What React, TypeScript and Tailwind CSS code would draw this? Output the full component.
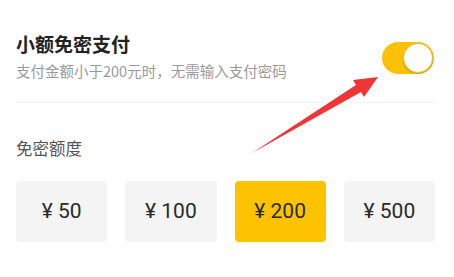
const amounts = [50, 100, 200, 500];

export default function App() {
  return (
    <div
      className="relative w-[454px] h-[277px] bg-white overflow-hidden"
      style={{ fontFamily: '"Noto Sans CJK SC", "Noto Sans", sans-serif' }}
    >
      <div className="pl-4 pr-[19px] pt-[31px]">
        <div className="flex items-center justify-between">
          <div>
            <div className="text-[19px] leading-[26px] font-bold text-[#222]">小额免密支付</div>
            <div className="mt-[4px] text-[14.5px] leading-[20px] text-[#9a9a9a]">
              支付金额小于200元时，无需输入支付密码
            </div>
          </div>
          <div className="mr-[1px] mt-[4px] flex h-[32px] w-[52px] items-center justify-end rounded-full bg-[#fcc107] pr-[1px]">
            <div className="h-[30px] w-[30px] rounded-full border border-[#e8c440] bg-white shadow-[0_1px_2px_rgba(0,0,0,0.2)]" />
          </div>
        </div>
        <div className="mt-[21px] h-px bg-[#f3f3f3]" />
        <div className="mt-[34px] text-[16.5px] leading-[23px] text-[#555]">免密额度</div>
        <div className="mt-[21px] grid grid-cols-4 gap-[18px]">
          {amounts.map((a) => (
            <div
              key={a}
              className={
                a === 200
                  ? "flex h-[61px] items-center justify-center rounded-[4px] bg-[#fec300] text-[21px] text-[#2a2a2a] font-['Roboto',sans-serif]"
                  : "flex h-[61px] items-center justify-center rounded-[4px] bg-[#f4f4f4] text-[21px] text-[#2a2a2a] font-['Roboto',sans-serif]"
              }
            >
              ¥ {a}
            </div>
          ))}
        </div>
      </div>
      <svg className="absolute left-0 top-0" width="454" height="277" viewBox="0 0 454 277">
        <polygon points="252,153 356,85 353,80 378,77 364,97 361,92" fill="#ef3535" />
      </svg>
    </div>
  );
}
